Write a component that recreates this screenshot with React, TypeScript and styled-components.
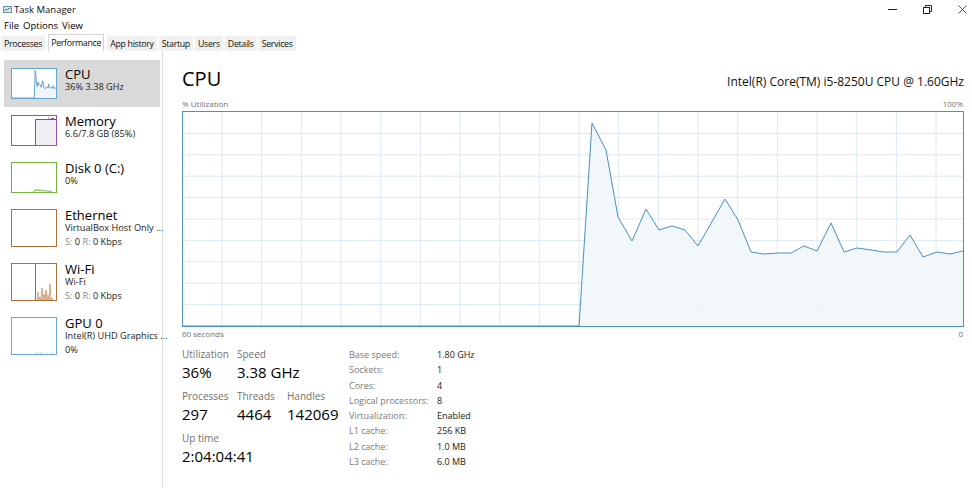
import React from "react";
import styled, { createGlobalStyle } from "styled-components";

const GlobalStyle = createGlobalStyle`
  html, body { margin: 0; padding: 0; background: #fff; }
  body {
    font-family: "Open Sans", "Noto Sans", sans-serif;
    color: #000;
    width: 972px;
    height: 488px;
    overflow: hidden;
  }
`;

const Window = styled.div`
  width: 972px;
  height: 488px;
  display: flex;
  flex-direction: column;
  background: #fff;
`;

const TitleBar = styled.div`
  height: 18px;
  display: flex;
  align-items: center;
  padding-left: 3px;
  font-size: 9.5px;
`;

const TitleText = styled.span`
  margin-left: 2px;
  color: #111;
`;

const Controls = styled.div`
  margin-left: auto;
  display: flex;
  align-items: center;
  gap: 26px;
  padding-right: 5px;
  color: #333;
`;

const MenuBar = styled.div`
  height: 15px;
  display: flex;
  align-items: center;
  gap: 4px;
  padding-left: 4px;
  font-size: 9.5px;
`;

const TabStrip = styled.div`
  height: 17px;
  margin-top: 1px;
  display: flex;
  align-items: flex-end;
  gap: 2px;
  padding-left: 1px;
`;

const Tab = styled.div<{ $active?: boolean }>`
  height: ${(p) => (p.$active ? "17px" : "15px")};
  box-sizing: border-box;
  display: flex;
  align-items: center;
  padding: 0 2px;
  margin: 0 ${(p) => (p.$active ? "1px" : "0")};
  font-size: 8.8px;
  letter-spacing: -0.3px;
  background: ${(p) => (p.$active ? "#fff" : "#f0f0f0")};
  border: 1px solid ${(p) => (p.$active ? "#d4d4d4" : "#f0f0f0")};
  border-bottom: none;
  color: #111;
`;

const Body = styled.div`
  flex: 1;
  display: flex;
  min-height: 0;
`;

const Sidebar = styled.div`
  width: 163px;
  box-sizing: border-box;
  padding: 9px 2px 0 4px;
  border-right: 1px solid #dcdcdc;
  display: flex;
  flex-direction: column;
`;

const Item = styled.div<{ $selected?: boolean }>`
  display: flex;
  align-items: flex-start;
  gap: 8px;
  padding: 8px 0 8px 7px;
  background: ${(p) => (p.$selected ? "#d9d9d9" : "transparent")};
`;

const Thumb = styled.div<{ $color: string; $h: number }>`
  width: 46px;
  height: ${(p) => p.$h}px;
  box-sizing: border-box;
  border: 1px solid ${(p) => p.$color};
  background: #fff;
  flex: none;
  display: flex;
  svg { display: block; }
`;

const ItemText = styled.div<{ $h: number }>`
  height: ${(p) => p.$h}px;
  display: flex;
  flex-direction: column;
  min-width: 0;
  white-space: nowrap;
`;

const ItemTitle = styled.div`
  font-size: 13px;
  line-height: 12px;
  color: #000;
`;

const ItemSub = styled.div`
  font-size: 9.2px;
  line-height: 14px;
  color: #222;
`;

const Dim = styled.span`
  color: #8a8a8a;
`;

const Main = styled.div`
  flex: 1;
  min-width: 0;
  padding: 16px 8px 0 19px;
  display: flex;
  flex-direction: column;
`;

const Header = styled.div`
  height: 24px;
  display: flex;
  align-items: baseline;
  justify-content: space-between;
`;

const BigTitle = styled.div`
  font-size: 20px;
  line-height: 24px;
`;

const Model = styled.div`
  font-size: 12px;
  line-height: 24px;
  color: #111;
`;

const Caption = styled.div<{ $top: number }>`
  margin-top: ${(p) => p.$top}px;
  display: flex;
  justify-content: space-between;
  font-size: 8px;
  line-height: 12px;
  color: #707070;
  padding-right: 1px;
`;

const Chart = styled.div`
  height: 216px;
  box-sizing: border-box;
  border: 1px solid #4a8fbf;
  margin-top: 1px;
  svg { display: block; width: 100%; height: 100%; }
`;

const Stats = styled.div`
  margin-top: 7px;
  display: flex;
`;

const StatsLeft = styled.div`
  width: 167px;
  display: grid;
  grid-template-columns: 55px 50px auto;
  row-gap: 6px;
  align-content: start;
`;

const StatBlock = styled.div<{ $span?: number }>`
  grid-column: span ${(p) => p.$span ?? 1};
  display: flex;
  flex-direction: column;
  white-space: nowrap;
`;

const StatLabel = styled.div`
  font-size: 10px;
  line-height: 14px;
  color: #707070;
`;

const StatValue = styled.div`
  font-size: 15px;
  line-height: 22px;
  color: #000;
`;

const Table = styled.div`
  display: grid;
  grid-template-columns: 88px auto;
  font-size: 9px;
  line-height: 15.3px;
  align-content: start;
`;

const TLabel = styled.div`
  color: #7a7a7a;
`;

const TValue = styled.div`
  color: #222;
`;

/* ---------- drawings ---------- */

const chartPoints: [number, number][] = [
  [0, 214], [396, 214], [409, 11], [423, 38], [435, 105], [449, 129], [463, 97],
  [476, 118], [489, 114], [502, 118], [515, 134], [542, 87], [555, 108],
  [568, 140], [581, 142], [595, 141], [608, 141], [621, 134], [634, 139],
  [648, 111], [661, 140], [674, 136], [688, 138], [701, 140], [714, 140],
  [727, 123], [740, 145], [754, 140], [767, 142], [780, 139],
];

const toPts = (pts: [number, number][], sx = 1, sy = 1) =>
  pts.map(([x, y]) => `${(x * sx).toFixed(1)},${(y * sy).toFixed(1)}`).join(" ");

const MainChart = () => {
  const hLines = Array.from({ length: 9 }, (_, i) => 21.4 * (i + 1));
  const vLines = Array.from({ length: 19 }, (_, i) => 39 + 39.67 * i);
  const fill = `${toPts(chartPoints)} 780,214`;
  return (
    <svg viewBox="0 0 780 214" preserveAspectRatio="none">
      {hLines.map((y) => (
        <line key={`h${y}`} x1={0} x2={780} y1={y} y2={y} stroke="#dce9f2" strokeWidth={1} />
      ))}
      {vLines.map((x) => (
        <line key={`v${x}`} x1={x} x2={x} y1={0} y2={214} stroke="#dce9f2" strokeWidth={1} />
      ))}
      <polygon points={fill} fill="#f1f6fa" opacity={0.9} />
      <polyline points={toPts(chartPoints)} fill="none" stroke="#4a8fbf" strokeWidth={1} />
    </svg>
  );
};

const CpuThumb = () => {
  const sx = 44 / 780;
  const sy = 29 / 214;
  return (
    <svg width="44" height="29" viewBox="0 0 44 29">
      <polygon points={`${toPts(chartPoints, sx, sy)} 44,29`} fill="#eef4f9" />
      <polyline points={toPts(chartPoints, sx, sy)} fill="none" stroke="#4a8fbf" strokeWidth={0.8} />
    </svg>
  );
};

const MemThumb = () => (
  <svg width="44" height="29" viewBox="0 0 44 29">
    <rect x="23.5" y="3.5" width="21" height="26" fill="#f1eef3" />
    <polyline points="23.5,29 23.5,3.5 44,3.5" fill="none" stroke="#9240ad" strokeWidth={1} />
    <line x1="36" x2="37" y1="2" y2="2" stroke="#9240ad" strokeWidth={1} />
    <line x1="39" x2="42" y1="2.5" y2="2.5" stroke="#9240ad" strokeWidth={1} />
  </svg>
);

const DiskThumb = () => (
  <svg width="44" height="29" viewBox="0 0 44 29">
    <polyline
      points="21,29 23,27 24,28 25,26 27,28 28,26.5 29,28 31,27 32,28.5 34,27.5 36,28.5 40,28"
      fill="none"
      stroke="#6aad2b"
      strokeWidth={0.8}
    />
  </svg>
);

const EmptyThumb = () => <svg width="44" height="36" viewBox="0 0 44 36" />;

const WifiThumb = () => (
  <svg width="44" height="36" viewBox="0 0 44 36">
    <line x1="23.5" x2="23.5" y1="0" y2="36" stroke="#a8692e" strokeWidth={1} />
    <polyline
      points="25,36 26,28 27,36 28,33 29,36 30,24 31,36 32,30 33,36 34,26 35,36 36,31 37,36 38,20 39,36 40,34 41,36"
      fill="#f3e7dc"
      stroke="#c08a5a"
      strokeWidth={0.7}
    />
  </svg>
);

const GpuThumb = () => (
  <svg width="44" height="36" viewBox="0 0 44 36">
    {[24, 26, 28, 30, 34, 39].map((x) => (
      <rect key={x} x={x} y={34.5} width={1} height={1} fill="#9fc3dc" />
    ))}
  </svg>
);

const AppIcon = () => (
  <svg width="9" height="9" viewBox="0 0 9 9">
    <rect x="0.5" y="1.5" width="8" height="6" fill="#dbe9f3" stroke="#6a8fae" strokeWidth={1} />
    <polyline points="1.5,6 3,4 4.5,5 6,3 7.5,4" fill="none" stroke="#3b7a3b" strokeWidth={0.8} />
  </svg>
);

const MinIcon = () => (
  <svg width="9" height="9" viewBox="0 0 9 9">
    <line x1="0" x2="9" y1="4.5" y2="4.5" stroke="#222" strokeWidth={1} />
  </svg>
);

const RestoreIcon = () => (
  <svg width="9" height="9" viewBox="0 0 9 9">
    <rect x="0.5" y="2.5" width="6" height="6" fill="none" stroke="#222" strokeWidth={1} />
    <polyline points="2.5,2.5 2.5,0.5 8.5,0.5 8.5,6.5 6.5,6.5" fill="none" stroke="#222" strokeWidth={1} />
  </svg>
);

const CloseIcon = () => (
  <svg width="9" height="9" viewBox="0 0 9 9">
    <line x1="0.5" y1="0.5" x2="8.5" y2="8.5" stroke="#444" strokeWidth={0.9} />
    <line x1="8.5" y1="0.5" x2="0.5" y2="8.5" stroke="#444" strokeWidth={0.9} />
  </svg>
);

/* ---------- data ---------- */

type SideItem = {
  title: string;
  lines: React.ReactNode[];
  color: string;
  h: number;
  thumb: React.ReactNode;
  selected?: boolean;
};

const items: SideItem[] = [
  { title: "CPU", lines: ["36%  3.38 GHz"], color: "#64a6d0", h: 31, thumb: <CpuThumb />, selected: true },
  { title: "Memory", lines: ["6.6/7.8 GB (85%)"], color: "#9a4fb3", h: 31, thumb: <MemThumb /> },
  { title: "Disk 0 (C:)", lines: ["0%"], color: "#77b43e", h: 31, thumb: <DiskThumb /> },
  {
    title: "Ethernet",
    lines: [
      "VirtualBox Host Only ...",
      <>
        <Dim>S:</Dim> 0 <Dim>R:</Dim> 0 Kbps
      </>,
    ],
    color: "#ad7036",
    h: 38,
    thumb: <EmptyThumb />,
  },
  {
    title: "Wi-Fi",
    lines: [
      "Wi-Fi",
      <>
        <Dim>S:</Dim> 0 <Dim>R:</Dim> 0 Kbps
      </>,
    ],
    color: "#ad7036",
    h: 38,
    thumb: <WifiThumb />,
  },
  { title: "GPU 0", lines: ["Intel(R) UHD Graphics ...", "0%"], color: "#6aa8d0", h: 38, thumb: <GpuThumb /> },
];

const tabs = ["Processes", "Performance", "App history", "Startup", "Users", "Details", "Services"];

const specs: [string, string][] = [
  ["Base speed:", "1.80 GHz"],
  ["Sockets:", "1"],
  ["Cores:", "4"],
  ["Logical processors:", "8"],
  ["Virtualization:", "Enabled"],
  ["L1 cache:", "256 KB"],
  ["L2 cache:", "1.0 MB"],
  ["L3 cache:", "6.0 MB"],
];

export default function App() {
  return (
    <>
      <GlobalStyle />
      <Window>
        <TitleBar>
          <AppIcon />
          <TitleText>Task Manager</TitleText>
          <Controls>
            <MinIcon />
            <RestoreIcon />
            <CloseIcon />
          </Controls>
        </TitleBar>
        <MenuBar>
          <span>File</span>
          <span>Options</span>
          <span>View</span>
        </MenuBar>
        <TabStrip>
          {tabs.map((t) => (
            <Tab key={t} $active={t === "Performance"}>
              {t}
            </Tab>
          ))}
        </TabStrip>
        <Body>
          <Sidebar>
            {items.map((it) => (
              <Item key={it.title} $selected={it.selected}>
                <Thumb $color={it.color} $h={it.h}>
                  {it.thumb}
                </Thumb>
                <ItemText $h={it.h}>
                  <ItemTitle>{it.title}</ItemTitle>
                  {it.lines.map((l, i) => (
                    <ItemSub key={i}>{l}</ItemSub>
                  ))}
                </ItemText>
              </Item>
            ))}
          </Sidebar>
          <Main>
            <Header>
              <BigTitle>CPU</BigTitle>
              <Model>Intel(R) Core(TM) i5-8250U CPU @ 1.60GHz</Model>
            </Header>
            <Caption $top={7}>
              <span>% Utilization</span>
              <span>100%</span>
            </Caption>
            <Chart>
              <MainChart />
            </Chart>
            <Caption $top={1}>
              <span>60 seconds</span>
              <span>0</span>
            </Caption>
            <Stats>
              <StatsLeft>
                <StatBlock>
                  <StatLabel>Utilization</StatLabel>
                  <StatValue>36%</StatValue>
                </StatBlock>
                <StatBlock $span={2}>
                  <StatLabel>Speed</StatLabel>
                  <StatValue>3.38 GHz</StatValue>
                </StatBlock>
                <StatBlock>
                  <StatLabel>Processes</StatLabel>
                  <StatValue>297</StatValue>
                </StatBlock>
                <StatBlock>
                  <StatLabel>Threads</StatLabel>
                  <StatValue>4464</StatValue>
                </StatBlock>
                <StatBlock>
                  <StatLabel>Handles</StatLabel>
                  <StatValue>142069</StatValue>
                </StatBlock>
                <StatBlock $span={3}>
                  <StatLabel>Up time</StatLabel>
                  <StatValue>2:04:04:41</StatValue>
                </StatBlock>
              </StatsLeft>
              <Table>
                {specs.map(([k, v]) => (
                  <React.Fragment key={k}>
                    <TLabel>{k}</TLabel>
                    <TValue>{v}</TValue>
                  </React.Fragment>
                ))}
              </Table>
            </Stats>
          </Main>
        </Body>
      </Window>
    </>
  );
}
